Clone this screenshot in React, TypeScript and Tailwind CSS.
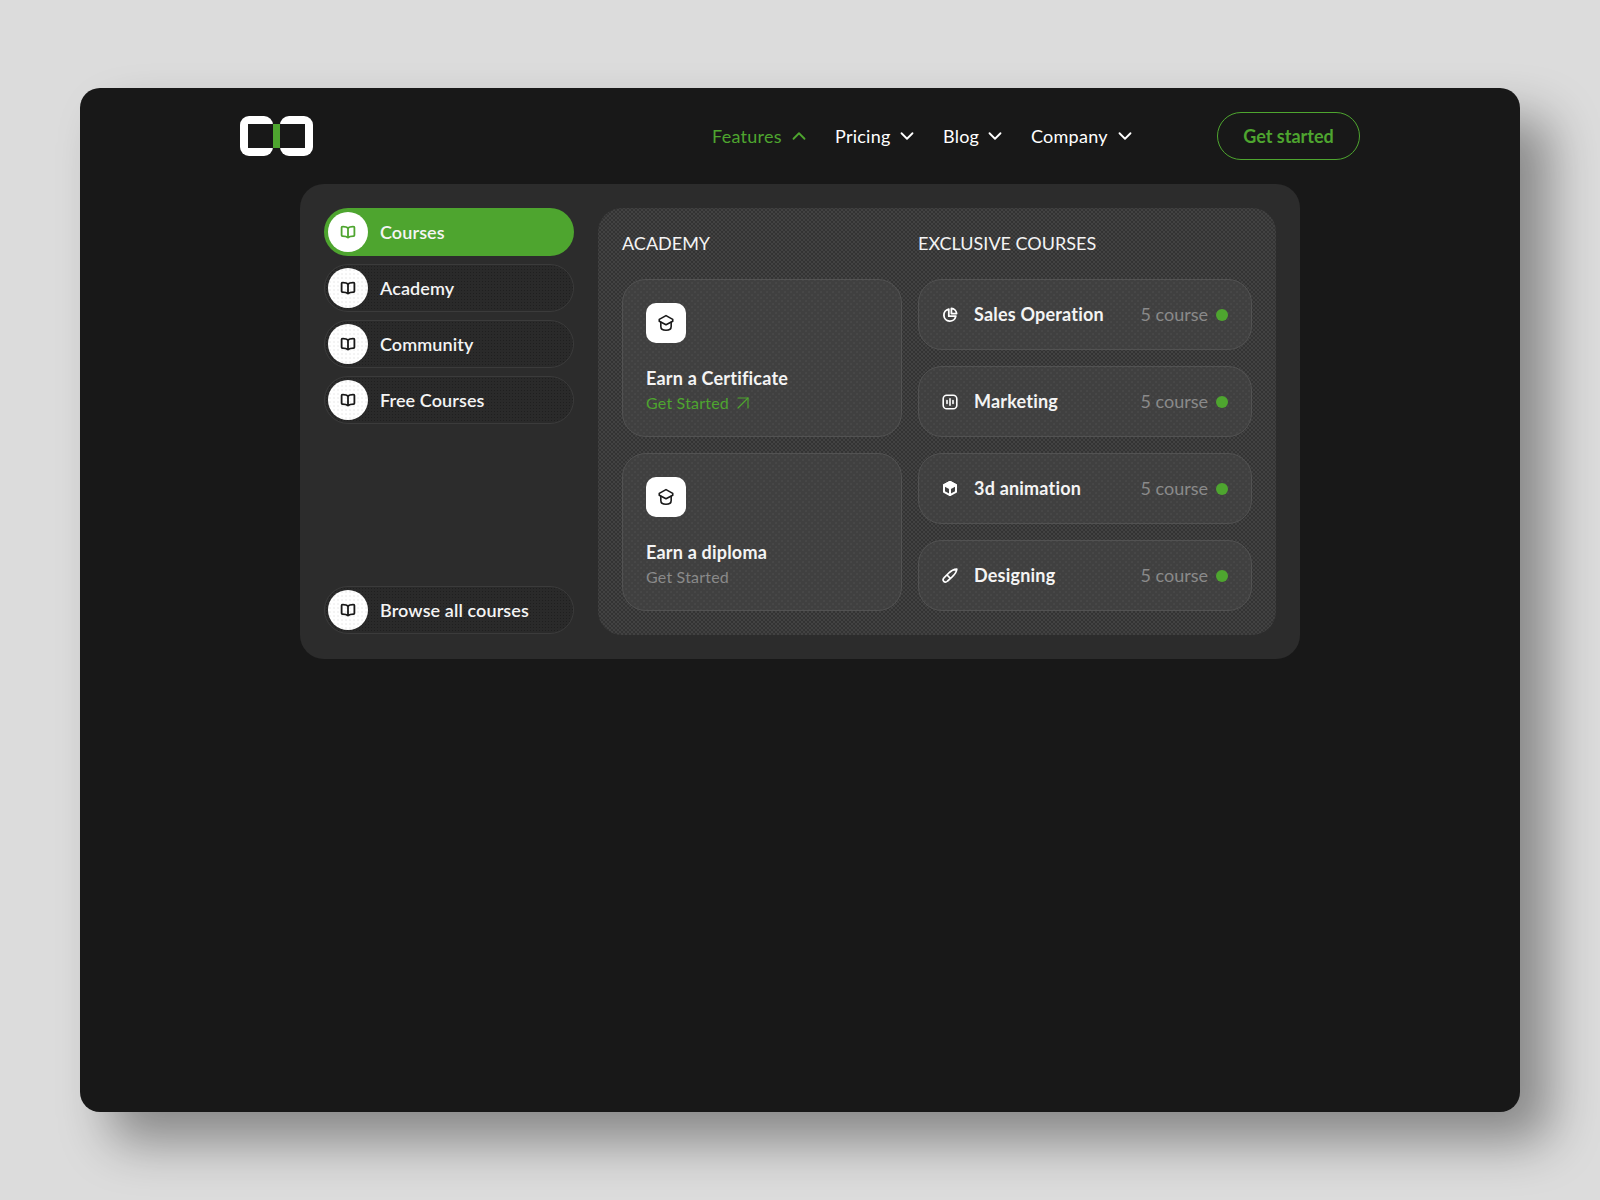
import React from 'react';
import { ChevronDown, ChevronUp, ArrowUpRight } from 'lucide-react';

const GREEN = 'text-[#4ea52f]';

const BookIcon = ({ className = 'text-[#181818]' }: { className?: string }) => (
  <svg width="16" height="16" viewBox="0 0 16 16" fill="none" stroke="currentColor" strokeWidth="1.8" strokeLinejoin="round" className={className}>
    <path d="M8 4C6.8 3 4.8 2.6 2.4 2.7c-.5 0-.8.3-.8.8v7.8c0 .5.3.8.8.8 2.4 0 4.4.4 5.6 1.4 1.2-1 3.2-1.4 5.6-1.4.5 0 .8-.3.8-.8V3.5c0-.5-.3-.8-.8-.8C11.200 2.600 9.200 3 8 4Z" />
    <path d="M8 4v9" />
  </svg>
);

const CapIcon = () => (
  <svg width="18" height="18" viewBox="0 0 16 16" fill="none" stroke="#181818" strokeWidth="1.4" strokeLinejoin="round" strokeLinecap="round">
    <path d="M8 1.400 14 4.800v1.600L8 9.600 2 6.400V4.800L8 1.400Z" />
    <path d="M3.400 7.400v3.600c0 2.200 2.200 3.400 4.600 3.400s4.600-1.200 4.600-3.400V7.400" />
  </svg>
);

const PieIcon = () => (
  <svg width="16" height="16" viewBox="0 0 16 16" fill="none" stroke="#fff" strokeWidth="1.800" strokeLinejoin="round">
    <path d="M6.800 2.200a6 6 0 1 0 7 7H6.800V2.200Z" />
    <path d="M9.400 1.400a5.600 5.600 0 0 1 5.200 5.200H9.400V1.400Z" />
  </svg>
);

const BarsIcon = () => (
  <svg width="16" height="16" viewBox="0 0 16 16" fill="none" stroke="#fff" strokeWidth="1.600" strokeLinecap="round">
    <rect x="1.200" y="1.200" width="13.600" height="13.600" rx="3.600" />
    <path d="M5 6.600v2.800M8 4.800v6.400M11 6.600v2.800" />
  </svg>
);

const CubeIcon = () => (
  <svg width="17" height="17" viewBox="0 0 16 16" stroke="#fff" strokeWidth="2" strokeLinejoin="round" strokeLinecap="round">
    <path d="M8 1.400 14 4.600v6.800L8 14.600l-6-3.200V4.600L8 1.400Z" fill="none" />
    <path d="M8 1.400 14 4.600 8 7.800 2 4.600 8 1.400Z" fill="#fff" />
    <path d="M8 7.800v6.800" fill="none" />
  </svg>
);

const BrushIcon = () => (
  <svg width="16" height="16" viewBox="0 0 16 16" fill="none" stroke="#fff" strokeWidth="1.700" strokeLinejoin="round">
    <path d="M14.800 1.200c-3.200.2-5.800 1.600-8 3.800L2.200 9.600c-1.300 1.300-1.300 2.900-.4 3.800.9.900 2.500.9 3.800-.4L10.400 8.600C13 6 14.600 4.200 14.800 1.200Z" />
    <path d="M5 7 8.400 10.400" />
  </svg>
);

const dotsDark = 'bg-[radial-gradient(#1f1f1f_0.6px,transparent_0.8px)] bg-[length:3px_3px]';
const dotsPanel = 'bg-[radial-gradient(#333333_0.7px,transparent_0.9px),radial-gradient(#333333_0.7px,transparent_0.9px)] bg-[length:4px_4px] bg-[position:0_0,2px_2px]';
const dotsCard = 'bg-[radial-gradient(#4f4f4f_0.6px,transparent_0.8px),radial-gradient(#4f4f4f_0.6px,transparent_0.8px)] bg-[length:6px_6px] bg-[position:0_0,3px_3px]';
const dotsWhite = 'bg-[radial-gradient(#e6e6e6_0.6px,transparent_0.8px)] bg-[length:4px_4px]';

const sideItems = ['Academy', 'Community', 'Free Courses'];

const SideItem = ({ label }: { label: string }) => (
  <div className={`flex h-12 items-center gap-3 rounded-full border border-[#3b3b3b] bg-[#2a2a2a] pl-[3px] ${dotsDark}`}>
    <div className={`flex h-10 w-10 items-center justify-center rounded-full bg-white ${dotsWhite}`}>
      <BookIcon />
    </div>
    <span className="text-[18px] font-semibold leading-none tracking-[0.1px] text-[#f4f4f4]">{label}</span>
  </div>
);

const AcademyCard = ({ title, active }: { title: string; active?: boolean }) => (
  <div className={`flex h-[158px] flex-col rounded-[24px] border border-[#525252] bg-[#404040] px-[23px] pt-[23px] ${dotsCard}`}>
    <div className="flex h-10 w-10 items-center justify-center rounded-[10px] bg-white">
      <CapIcon />
    </div>
    <div className="mt-6 text-[18px] font-bold leading-[22px] tracking-[0.2px] text-[#f4f4f4]">{title}</div>
    <div className={`mt-1 flex h-5 items-center gap-[2px] text-[16px] tracking-[0.2px] leading-5 ${active ? GREEN : 'text-[#8a8a8a]'}`}>
      Get Started
      {active && <ArrowUpRight size={24} strokeWidth={1.2} />}
    </div>
  </div>
);

const courses = [
  { name: 'Sales Operation', icon: <PieIcon /> },
  { name: 'Marketing', icon: <BarsIcon /> },
  { name: '3d animation', icon: <CubeIcon /> },
  { name: 'Designing', icon: <BrushIcon /> },
];

const navItems = [
  { label: 'Pricing', width: 'w-[61px]' },
  { label: 'Blog', width: 'w-[41px]' },
  { label: 'Company', width: 'w-[83px]' },
];

export default function App() {
  return (
    <div className="h-[1200px] w-[1600px] overflow-hidden bg-[#dcdcdc] pl-20 pt-[88px] font-[Lato,sans-serif]">
      <div className="h-[1024px] w-[1440px] rounded-[20px] bg-[#181818] pt-6 shadow-[30px_30px_50px_rgba(0,0,0,0.38)]">
        {/* Top bar */}
        <header className="flex h-12 items-center pl-40 pr-40">
          <div className="flex h-10 w-[73px] items-center">
            <div className="h-10 w-[33px] rounded-[9px] bg-white py-2 pl-2">
              <div className="h-full w-full bg-[#181818]" />
            </div>
            <div className="h-[24px] w-[7px] bg-[#4ea52f]" />
            <div className="h-10 w-[33px] rounded-[9px] bg-white py-2 pr-2">
              <div className="h-full w-full bg-[#181818]" />
            </div>
          </div>
          <nav className="ml-[399px] flex items-center gap-[25px] text-[18px] tracking-[0.25px] text-white">
            <div className={`flex items-center ${GREEN}`}>
              <span className="w-[76px]">Features</span>
              <ChevronUp size={22} strokeWidth={2} />
            </div>
            {navItems.map((item) => (
              <div key={item.label} className="flex items-center">
                <span className={item.width}>{item.label}</span>
                <ChevronDown size={22} strokeWidth={2} />
              </div>
            ))}
          </nav>
          <button className={`ml-auto h-12 w-[143px] rounded-full border border-[#4ea52f] text-[18px] font-bold ${GREEN}`}>
            Get started
          </button>
        </header>

        {/* Mega menu */}
        <div className="mx-auto mt-6 flex h-[475px] w-[1000px] gap-6 rounded-[24px] bg-[#2c2c2c] p-6">
          <aside className="flex w-[250px] flex-col">
            <div className="flex h-12 items-center gap-3 rounded-full bg-[#4ea52f] pl-1">
              <div className="flex h-10 w-10 items-center justify-center rounded-full bg-white">
                <BookIcon className={GREEN} />
              </div>
              <span className="text-[18px] font-semibold leading-none tracking-[0.1px] text-[#f4f4f4]">Courses</span>
            </div>
            <div className="mt-2 flex flex-col gap-2">
              {sideItems.map((label) => (
                <SideItem key={label} label={label} />
              ))}
            </div>
            <div className="mt-auto mb-px">
              <SideItem label="Browse all courses" />
            </div>
          </aside>

          <main className={`flex h-[427px] w-[678px] gap-4 rounded-[24px] bg-[#424242] p-6 ${dotsPanel}`}>
            <section className="w-[280px]">
              <h2 className="text-[18px] leading-[22px] text-[#f4f4f4]">ACADEMY</h2>
              <div className="mt-[25px] flex flex-col gap-4">
                <AcademyCard title="Earn a Certificate" active />
                <AcademyCard title="Earn a diploma" />
              </div>
            </section>
            <section className="w-[334px]">
              <h2 className="text-[18px] leading-[22px] text-[#f4f4f4]">EXCLUSIVE COURSES</h2>
              <div className="mt-[25px] flex flex-col gap-4">
                {courses.map((course) => (
                  <div key={course.name} className={`flex h-[71px] items-center rounded-[24px] border border-[#525252] bg-[#404040] px-[23px] ${dotsCard}`}>
                    <div className="flex w-4 justify-center">{course.icon}</div>
                    <span className="ml-4 text-[18px] font-bold tracking-[0.2px] text-[#f4f4f4]">{course.name}</span>
                    <span className="ml-auto text-[18px] text-[#8a8a8a]">5 course</span>
                    <span className="ml-2 h-3 w-3 rounded-full bg-[#4ea52f]" />
                  </div>
                ))}
              </div>
            </section>
          </main>
        </div>
      </div>
    </div>
  );
}
